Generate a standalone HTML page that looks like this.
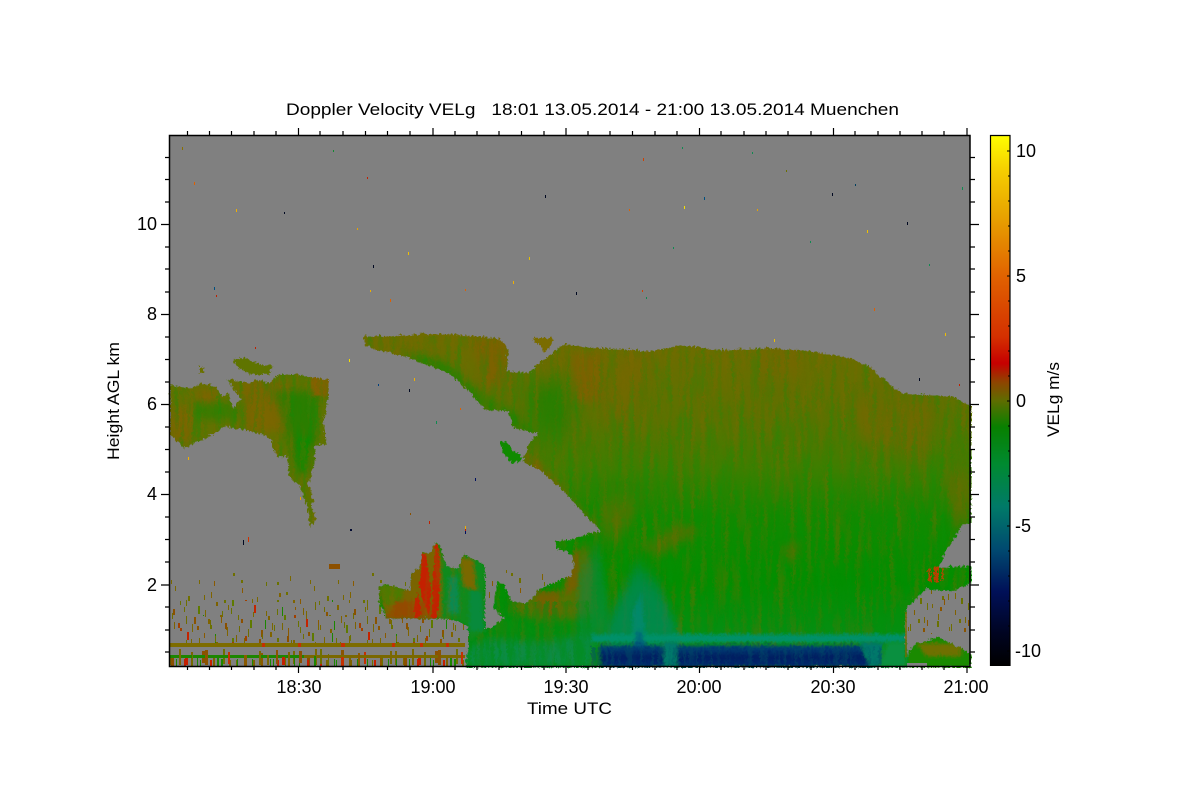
<!DOCTYPE html>
<html>
<head>
<meta charset="utf-8">
<style>
html,body{margin:0;padding:0;background:#fff;width:1200px;height:800px;overflow:hidden}
svg{display:block}
text{font-family:"Liberation Sans",sans-serif;font-size:17px;fill:#000}
.t{font-size:18px}
</style>
</head>
<body>
<svg width="1200" height="800" viewBox="0 0 1200 800" xmlns="http://www.w3.org/2000/svg">
<defs>
<linearGradient id="cb" x1="0" y1="135" x2="0" y2="666" gradientUnits="userSpaceOnUse">
<stop offset="0" stop-color="#ffff00"/>
<stop offset="0.07" stop-color="#f5cc00"/>
<stop offset="0.15" stop-color="#e8a400"/>
<stop offset="0.27" stop-color="#e06000"/>
<stop offset="0.38" stop-color="#d43000"/>
<stop offset="0.43" stop-color="#c60000"/>
<stop offset="0.465" stop-color="#8f4400"/>
<stop offset="0.50" stop-color="#5f6c00"/>
<stop offset="0.55" stop-color="#088000"/>
<stop offset="0.62" stop-color="#008a30"/>
<stop offset="0.70" stop-color="#007a68"/>
<stop offset="0.78" stop-color="#004a70"/>
<stop offset="0.86" stop-color="#001058"/>
<stop offset="0.94" stop-color="#000420"/>
<stop offset="1" stop-color="#000000"/>
</linearGradient>
<linearGradient id="mg" x1="0" y1="340" x2="0" y2="640" gradientUnits="userSpaceOnUse">
<stop offset="0" stop-color="#6e6c00"/>
<stop offset="0.25" stop-color="#5c7200"/>
<stop offset="0.42" stop-color="#3e7e00"/>
<stop offset="0.58" stop-color="#128a00"/>
<stop offset="0.8" stop-color="#028e00"/>
<stop offset="1" stop-color="#068e14"/>
</linearGradient>
<linearGradient id="blue" x1="0" y1="641" x2="0" y2="666" gradientUnits="userSpaceOnUse">
<stop offset="0" stop-color="#006a78"/>
<stop offset="0.22" stop-color="#003c72"/>
<stop offset="0.6" stop-color="#001c60"/>
<stop offset="1" stop-color="#002a70"/>
</linearGradient>
<filter id="b4" x="-30%" y="-30%" width="160%" height="160%" color-interpolation-filters="sRGB"><feGaussianBlur stdDeviation="4"/></filter>
<filter id="b2" x="-30%" y="-30%" width="160%" height="160%" color-interpolation-filters="sRGB"><feGaussianBlur stdDeviation="1.5"/></filter>
<filter id="b10" x="-30%" y="-30%" width="160%" height="160%" color-interpolation-filters="sRGB"><feGaussianBlur stdDeviation="10"/></filter>
<filter id="b7" x="-30%" y="-30%" width="160%" height="160%" color-interpolation-filters="sRGB"><feGaussianBlur stdDeviation="3 9"/></filter>
<filter id="streakB" x="0" y="0" width="100%" height="100%" color-interpolation-filters="sRGB">
<feTurbulence type="fractalNoise" baseFrequency="0.18 0.018" numOctaves="3" seed="4"/>
<feColorMatrix type="matrix" values="0 0 0 0 0.50  0 0 0 0 0.41  0 0 0 0 0  3 0 0 0 -1.35"/>
</filter>
<filter id="streakG" x="0" y="0" width="100%" height="100%" color-interpolation-filters="sRGB">
<feTurbulence type="fractalNoise" baseFrequency="0.18 0.02" numOctaves="3" seed="9"/>
<feColorMatrix type="matrix" values="0 0 0 0 0  0 0 0 0 0.58  0 0 0 0 0.04  3 0 0 0 -1.35"/>
</filter>
<filter id="streakT" x="0" y="0" width="100%" height="100%" color-interpolation-filters="sRGB">
<feTurbulence type="fractalNoise" baseFrequency="0.3 0.03" numOctaves="2" seed="15"/>
<feColorMatrix type="matrix" values="0 0 0 0 0  0 0 0 0 0.30  0 0 0 0 0.40  3.4 0 0 0 -1.4"/>
</filter>
<filter id="streakL" x="0" y="0" width="100%" height="100%" color-interpolation-filters="sRGB">
<feTurbulence type="fractalNoise" baseFrequency="0.25 0.03" numOctaves="2" seed="21"/>
<feColorMatrix type="matrix" values="0 0 0 0 0  0 0 0 0 0.55  0 0 0 0 0.06  3.4 0 0 0 -1.3"/>
</filter>
<filter id="rough" x="-2%" y="-2%" width="104%" height="104%" color-interpolation-filters="sRGB">
<feTurbulence type="turbulence" baseFrequency="0.28 0.22" numOctaves="2" seed="3" result="n"/>
<feDisplacementMap in="SourceGraphic" in2="n" scale="5" xChannelSelector="R" yChannelSelector="G"/>
</filter>
<clipPath id="main"><path fill-rule="evenodd" d="M363 335L378 335L400 334L427 333L445 333L477 335L498 338L503 343L507 350L505 370L527 372L537 363L550 353L563 343L600 347L650 350L680 344L720 349L770 347L810 350L850 357L868 365L880 376L900 392L950 395L970 405L970 522L960 524L956 534L944 550L938 566L970 565L970 582L950 590L925 588L912 600L905 607L904 633L907 657L907 666L465 666L467 640L467 625L453 618L385 617L378 600L378 585L385 583L403 588L409 590L410 573L418 567L422 550L428 553L435 540L440 547L445 565L457 567L463 552L470 557L483 563L484 577L484 627L490 627L503 617L492 606L496 580L503 583L510 600L523 602L532 597L538 588L550 583L560 578L570 575L573 563L570 553L555 547L553 540L570 538L590 532L600 530L583 513L563 490L540 470L522 460L527 443L537 432L513 427L507 410L483 408L470 393L450 373L430 365L400 354L380 350L363 344Z M550 367L558 367L558 378L550 378Z"/></clipPath>
<clipPath id="left"><path d="M169 384L190 387L200 382L213 385L222 395L227 392L232 407L240 398L226 378L250 382L255 378L268 382L277 373L297 373L327 379L327 392L325 410L322 420L325 443L313 445L314 457L310 475L307 484L310 490L313 500L309 503L315 517L309 527L306 505L298 483L288 477L286 453L278 457L272 448L270 437L250 430L230 427L222 425L213 433L203 437L183 447L170 435L169 433Z"/></clipPath>
<clipPath id="rlow"><path d="M907 653L913 643L925 640L937 635L950 642L960 647L970 653L970 666L907 666Z"/></clipPath>
<pattern id="sp1" x="169" y="605" width="181" height="40" patternUnits="userSpaceOnUse">
<rect x="3" y="8" width="1" height="6" fill="#6f6c00"/><rect x="9" y="18" width="2" height="5" fill="#a04000"/><rect x="15" y="2" width="1" height="5" fill="#6f7000"/><rect x="18" y="27" width="2" height="8" fill="#c42400"/><rect x="25" y="12" width="2" height="7" fill="#8a5400"/><rect x="30" y="33" width="1" height="5" fill="#7a6800"/><rect x="36" y="5" width="1" height="7" fill="#7a6800"/><rect x="41" y="20" width="2" height="4" fill="#6a7200"/><rect x="46" y="29" width="1" height="9" fill="#1b8600"/><rect x="52" y="10" width="1" height="8" fill="#8a5a00"/><rect x="57" y="22" width="2" height="3" fill="#806400"/><rect x="62" y="3" width="1" height="6" fill="#6a7200"/><rect x="67" y="30" width="1" height="7" fill="#7d6200"/><rect x="72" y="14" width="2" height="4" fill="#8c5000"/><rect x="79" y="24" width="1" height="8" fill="#6f6c00"/><rect x="84" y="7" width="1" height="5" fill="#7a6800"/><rect x="90" y="34" width="2" height="4" fill="#8a5400"/><rect x="96" y="15" width="1" height="9" fill="#1b8600"/><rect x="101" y="27" width="2" height="5" fill="#806400"/><rect x="108" y="4" width="1" height="6" fill="#6a7200"/><rect x="113" y="18" width="1" height="7" fill="#7a6800"/><rect x="118" y="31" width="2" height="6" fill="#8a5000"/><rect x="125" y="10" width="2" height="3" fill="#a04000"/><rect x="131" y="22" width="1" height="6" fill="#6f7000"/><rect x="137" y="6" width="1" height="8" fill="#7a6800"/><rect x="143" y="28" width="2" height="8" fill="#5f7a00"/><rect x="149" y="15" width="1" height="5" fill="#8a5a00"/><rect x="155" y="2" width="1" height="5" fill="#6f6c00"/><rect x="161" y="24" width="2" height="4" fill="#7d6200"/><rect x="167" y="33" width="1" height="6" fill="#6a7200"/><rect x="172" y="11" width="1" height="7" fill="#806400"/><rect x="177" y="20" width="2" height="8" fill="#5f7a00"/>
</pattern>
<pattern id="sp1b" href="#sp1" patternTransform="translate(67 13)"/>
<pattern id="sp1c" href="#sp1" patternTransform="translate(119 27)"/>
<pattern id="sp4" x="169" y="568" width="139" height="37" patternUnits="userSpaceOnUse">
<rect x="6" y="18" width="1" height="5" fill="#7a6800"/><rect x="19" y="28" width="2" height="5" fill="#6f7000"/><rect x="30" y="12" width="1" height="4" fill="#7a6800"/><rect x="42" y="24" width="1" height="6" fill="#806400"/><rect x="55" y="32" width="2" height="3" fill="#6a7200"/><rect x="64" y="5" width="2" height="3" fill="#6f7000"/><rect x="73" y="20" width="1" height="5" fill="#8a5a00"/><rect x="88" y="29" width="1" height="5" fill="#7a6800"/><rect x="97" y="14" width="1" height="4" fill="#6a7200"/><rect x="110" y="25" width="2" height="4" fill="#806400"/><rect x="121" y="8" width="1" height="5" fill="#7a6800"/><rect x="131" y="31" width="1" height="5" fill="#8a5a00"/>
</pattern>
<pattern id="sp4b" href="#sp4" patternTransform="translate(53 19)"/>
<pattern id="sp2" x="169" y="649" width="233" height="18" patternUnits="userSpaceOnUse">
<rect x="1" y="6" width="2" height="10" fill="#7a6800"/><rect x="7" y="10" width="1" height="7" fill="#1b8600"/><rect x="10" y="1" width="2" height="14" fill="#8a5400"/><rect x="16" y="8" width="3" height="8" fill="#c42000"/><rect x="22" y="3" width="2" height="14" fill="#7d6200"/><rect x="28" y="9" width="1" height="8" fill="#1b8600"/><rect x="33" y="2" width="3" height="12" fill="#8c5000"/><rect x="41" y="11" width="2" height="6" fill="#c42000"/><rect x="48" y="7" width="2" height="10" fill="#1b8600"/><rect x="54" y="0" width="2" height="15" fill="#6f7000"/><rect x="60" y="11" width="2" height="6" fill="#7a6800"/><rect x="68" y="10" width="1" height="7" fill="#1b8600"/><rect x="75" y="8" width="3" height="9" fill="#c43000"/><rect x="84" y="11" width="2" height="6" fill="#7d6200"/><rect x="92" y="4" width="2" height="13" fill="#8a5a00"/><rect x="101" y="10" width="1" height="7" fill="#1b8600"/><rect x="108" y="11" width="2" height="6" fill="#c42000"/><rect x="116" y="8" width="1" height="9" fill="#6a7200"/><rect x="124" y="2" width="2" height="13" fill="#7a6800"/><rect x="130" y="10" width="1" height="7" fill="#1b8600"/><rect x="138" y="9" width="3" height="8" fill="#8a5000"/><rect x="146" y="0" width="2" height="16" fill="#7a6800"/><rect x="151" y="10" width="2" height="7" fill="#c42000"/><rect x="159" y="5" width="1" height="12" fill="#6a7200"/><rect x="167" y="11" width="1" height="6" fill="#1b8600"/><rect x="172" y="1" width="3" height="15" fill="#8a5400"/><rect x="180" y="9" width="2" height="8" fill="#7d6200"/><rect x="188" y="10" width="2" height="7" fill="#1b8600"/><rect x="195" y="3" width="2" height="12" fill="#c43000"/><rect x="203" y="11" width="1" height="6" fill="#6a7200"/><rect x="211" y="6" width="3" height="11" fill="#8a5a00"/><rect x="219" y="10" width="1" height="7" fill="#1b8600"/><rect x="226" y="2" width="2" height="14" fill="#7a6800"/>
</pattern>
<pattern id="sp2b" href="#sp2" patternTransform="translate(97 0)"/>
<pattern id="sp3" x="905" y="590" width="41" height="44" patternUnits="userSpaceOnUse">
<rect x="2" y="4" width="1" height="6" fill="#7a6800"/><rect x="9" y="20" width="1" height="5" fill="#806000"/><rect x="15" y="8" width="2" height="6" fill="#6a7200"/><rect x="22" y="30" width="1" height="6" fill="#8a5400"/><rect x="27" y="14" width="1" height="4" fill="#7a6800"/><rect x="5" y="34" width="1" height="7" fill="#6f7000"/><rect x="18" y="38" width="2" height="4" fill="#8a5400"/><rect x="33" y="24" width="1" height="6" fill="#7a6800"/><rect x="37" y="6" width="2" height="4" fill="#6f7000"/>
</pattern>
<pattern id="sp3b" href="#sp3" patternTransform="translate(17 23)"/>
</defs>

<rect x="169" y="135" width="801" height="531" fill="#808080"/>

<!-- speckles in gray regions -->
<rect x="169" y="568" width="300" height="37" fill="url(#sp4)"/>
<rect x="169" y="580" width="300" height="30" fill="url(#sp4b)"/>
<rect x="169" y="605" width="300" height="40" fill="url(#sp1)"/>
<rect x="169" y="600" width="300" height="45" fill="url(#sp1b)"/>
<rect x="169" y="615" width="300" height="30" fill="url(#sp1c)"/>
<rect x="169" y="649" width="296" height="18" fill="url(#sp2)"/>
<rect x="169" y="643" width="296" height="4" fill="#7d6c00"/>
<rect x="169" y="655" width="135" height="3" fill="#1c8600"/>
<rect x="304" y="655" width="161" height="3" fill="#7a6800"/>
<rect x="169" y="649" width="296" height="18" fill="url(#sp2b)"/>
<rect x="262" y="643" width="3" height="4" fill="#c43000"/><rect x="298" y="643" width="3" height="4" fill="#c43000"/><rect x="341" y="643" width="4" height="4" fill="#c43000"/><rect x="392" y="643" width="3" height="4" fill="#c43000"/><rect x="420" y="643" width="3" height="4" fill="#c43000"/><rect x="446" y="643" width="3" height="4" fill="#c43000"/>
<rect x="470" y="570" width="100" height="35" fill="url(#sp4)"/>
<rect x="470" y="570" width="100" height="35" fill="url(#sp4b)"/>
<rect x="905" y="590" width="65" height="44" fill="url(#sp3)"/>
<rect x="905" y="590" width="65" height="44" fill="url(#sp3b)"/>
<rect x="329" y="564" width="11" height="5" fill="#8c5000"/>

<!-- main cloud -->
<g filter="url(#rough)">
<g clip-path="url(#main)">
<rect x="169" y="135" width="801" height="531" fill="url(#mg)"/>
<path d="M400 352L440 358L480 392L515 412L540 440L510 425L480 410L450 380Z" fill="#2a8000" filter="url(#b4)"/>
<path d="M525 385L565 375L575 420L555 440L530 420Z" fill="#2a7e00" filter="url(#b10)"/>
<path d="M470 338H505V385H485ZM570 352H600V400H575ZM525 445L545 470L585 515L598 530L580 530L555 500L525 470Z" fill="#7c6200" filter="url(#b4)"/>
<path d="M600 410L625 350L650 350L625 430ZM760 345H800V375H760ZM850 400H930L925 460L860 440ZM945 470H970V525H950ZM600 500H640L620 535H600Z" fill="#7a6600" filter="url(#b7)" opacity="0.6"/>
<path d="M640 545L680 522L700 530L655 555ZM780 545L800 540L790 565Z" fill="#806000" filter="url(#b4)" opacity="0.5"/>
<rect x="169" y="335" width="801" height="331" filter="url(#streakB)" opacity="0.4"/>
<rect x="169" y="335" width="801" height="331" filter="url(#streakG)" opacity="0.3"/>
<!-- low mixed area -->
<path d="M515 592H560L568 565L585 540L592 570L590 615L540 620L510 610Z" fill="#7a6600" filter="url(#b4)" opacity="0.7"/>
<path d="M535 590H558L556 615L535 610ZM566 558L578 548L576 585L565 595Z" fill="#8a5600" filter="url(#b2)" opacity="0.6"/>
<path d="M468 645L490 638L540 642L590 632L590 666H465Z" fill="#0a8c50" filter="url(#b4)" opacity="0.8"/>
<path d="M578 570L598 545L612 640H575Z" fill="#0a8a48" filter="url(#b7)" opacity="0.55"/>
<path d="M612 610L636 565L658 585L672 620L682 645H605Z" fill="#00886a" filter="url(#b7)" opacity="0.65"/>
<path d="M632 610L640 590L645 640H630Z" fill="#008a80" filter="url(#b2)" opacity="0.6"/>
<rect x="590" y="633" width="315" height="8" fill="#00906a" filter="url(#b2)"/>
<rect x="465" y="600" width="125" height="66" filter="url(#streakL)" opacity="0.55"/>
<!-- navy band -->
<path d="M598 644H632L636 630L640 630L645 644H662L664 666H600ZM673 644H860L870 666H676Z" fill="url(#blue)" filter="url(#b2)"/>
<path d="M662 641H676V666H662ZM858 641H882L880 666H868Z" fill="#00786a" filter="url(#b2)"/>
<path d="M878 666L886 641H905V666Z" fill="#0a9040" filter="url(#b2)"/>
<rect x="590" y="646" width="290" height="20" filter="url(#streakT)" opacity="0.5"/>
<!-- plume -->
<path d="M378 585L403 588L410 572L422 550L435 540L443 563L447 617L385 617Z" fill="#7a6400" filter="url(#b2)"/>
<path d="M378 583H402L400 602L384 604Z" fill="#4a7c00" filter="url(#b2)"/>
<path d="M395 600H430V617H385Z" fill="#944a00" filter="url(#b2)"/>
<path d="M440 545L455 566L466 552L484 565L484 630L467 640L467 625L453 618L440 617Z" fill="#108a1c" filter="url(#b2)"/>
<path d="M448 575L456 575L458 612L446 612Z" fill="#0a8a52" filter="url(#b2)"/>
<path d="M458 555L472 558L476 590L462 585Z" fill="#7a6800" filter="url(#b2)"/>
<path d="M468 590L480 590L483 630L468 630Z" fill="#088a3c" filter="url(#b2)"/>
<path d="M421 552L424 552L430 590L427 615L424 605L418 585ZM434 543L437 545L439 582L436 617H430L432 580ZM413 604L417 592L420 615L413 617Z" fill="#c42000"/>
<rect x="378" y="545" width="85" height="72" filter="url(#streakB)" opacity="0.5"/>
</g>
</g>

<!-- left cloud -->
<g filter="url(#rough)">
<g clip-path="url(#left)">
<rect x="169" y="360" width="170" height="175" fill="#627200"/>
<path d="M240 380H290V430H245ZM169 405H190V440H169ZM195 388H215V405H195Z" fill="#7a6600" filter="url(#b4)"/>
<path d="M275 390L318 390L316 430L308 470L295 475L285 430Z" fill="#2a7e00" filter="url(#b4)"/>
<path d="M298 435L310 435L306 470H300Z" fill="#108a00" filter="url(#b2)"/>
<path d="M190 402H238V418H195Z" fill="#3a7c00" filter="url(#b4)"/>
<path d="M310 375H330V395H312Z" fill="#866000" filter="url(#b2)"/>
<rect x="169" y="360" width="170" height="175" filter="url(#streakB)" opacity="0.45"/>
<rect x="169" y="360" width="170" height="175" filter="url(#streakG)" opacity="0.35"/>
</g>
<path d="M231 358L245 357L258 363L272 365L267 373L248 373L238 367Z" fill="#5f7400"/>
<rect x="198" y="366" width="5" height="6" fill="#6a7000"/>
<path d="M500 441L506 440L512 450L520 454L520 460L510 462L501 451Z" fill="#108a00"/>
<path d="M530 337L552 337L550 345L543 351L538 344Z" fill="#7a6c00"/>
<g clip-path="url(#rlow)">
<rect x="905" y="630" width="66" height="37" fill="#1a8a00"/>
<path d="M915 642H960V655H925Z" fill="#6f7000" filter="url(#b2)"/>
</g>
<rect x="927" y="567" width="3" height="14" fill="#b04400"/><rect x="933" y="565" width="4" height="16" fill="#b84000"/><rect x="940" y="567" width="2" height="12" fill="#a05000"/>
</g>
<rect x="905" y="612" width="2" height="45" fill="#7a6a00" opacity="0.7"/>
<rect x="907" y="663" width="20" height="3" fill="#808080"/>

<!-- scattered pixels -->
<g>
<rect x="182" y="147" width="1" height="3" fill="#8a7000"/><rect x="194" y="182" width="1" height="3" fill="#e06000"/><rect x="236" y="209" width="1" height="3" fill="#f0b000"/><rect x="284" y="212" width="1" height="2" fill="#000820"/><rect x="333" y="150" width="1" height="2" fill="#108a30"/><rect x="367" y="177" width="1" height="2" fill="#c02000"/><rect x="357" y="228" width="1" height="2" fill="#e8a400"/><rect x="373" y="265" width="1" height="3" fill="#000820"/><rect x="408" y="252" width="1" height="3" fill="#f0c000"/><rect x="214" y="287" width="1" height="3" fill="#005080"/><rect x="216" y="295" width="1" height="2" fill="#c02000"/><rect x="370" y="290" width="1" height="2" fill="#f0b000"/><rect x="390" y="299" width="1" height="3" fill="#e06000"/><rect x="465" y="289" width="1" height="2" fill="#e06000"/>
<rect x="545" y="195" width="1" height="3" fill="#000820"/><rect x="643" y="158" width="1" height="3" fill="#d04000"/><rect x="682" y="147" width="1" height="2" fill="#108a50"/><rect x="629" y="209" width="1" height="2" fill="#e06000"/><rect x="684" y="206" width="1" height="3" fill="#f5e000"/><rect x="704" y="197" width="1" height="3" fill="#005080"/><rect x="757" y="209" width="1" height="2" fill="#e8a400"/><rect x="752" y="152" width="1" height="2" fill="#108a50"/><rect x="786" y="170" width="1" height="2" fill="#6a7000"/><rect x="832" y="193" width="1" height="3" fill="#000820"/><rect x="855" y="184" width="1" height="2" fill="#004060"/><rect x="907" y="222" width="1" height="3" fill="#000820"/><rect x="867" y="230" width="1" height="3" fill="#f0c000"/><rect x="962" y="187" width="1" height="3" fill="#108a50"/><rect x="929" y="264" width="1" height="2" fill="#108a50"/><rect x="810" y="241" width="1" height="2" fill="#108a50"/><rect x="673" y="247" width="1" height="2" fill="#108a50"/><rect x="529" y="257" width="1" height="3" fill="#e8c000"/><rect x="513" y="281" width="1" height="3" fill="#f0b000"/><rect x="576" y="292" width="1" height="3" fill="#000820"/><rect x="642" y="290" width="1" height="2" fill="#d04000"/><rect x="646" y="297" width="1" height="2" fill="#108a50"/><rect x="874" y="308" width="1" height="3" fill="#e06000"/><rect x="945" y="333" width="1" height="3" fill="#f0c000"/><rect x="919" y="378" width="1" height="3" fill="#000820"/><rect x="959" y="384" width="1" height="2" fill="#c02000"/><rect x="774" y="339" width="1" height="3" fill="#f0c000"/><rect x="255" y="347" width="1" height="2" fill="#c02000"/>
<rect x="349" y="359" width="1" height="3" fill="#f5e000"/><rect x="378" y="384" width="1" height="2" fill="#004080"/><rect x="414" y="378" width="1" height="3" fill="#f0b000"/><rect x="409" y="389" width="1" height="3" fill="#000820"/><rect x="460" y="408" width="1" height="2" fill="#e06000"/><rect x="436" y="421" width="1" height="3" fill="#108a50"/><rect x="188" y="457" width="1" height="3" fill="#f0b000"/><rect x="300" y="497" width="1" height="3" fill="#e8a400"/><rect x="350" y="529" width="2" height="2" fill="#000830"/><rect x="465" y="526" width="1" height="3" fill="#f0b000"/><rect x="465" y="529" width="1" height="2" fill="#c02000"/><rect x="465" y="531" width="1" height="3" fill="#001060"/><rect x="429" y="521" width="1" height="3" fill="#c02000"/><rect x="243" y="540" width="1" height="5" fill="#000820"/><rect x="248" y="537" width="1" height="5" fill="#d03000"/><rect x="410" y="513" width="1" height="2" fill="#8a5000"/><rect x="475" y="478" width="1" height="3" fill="#001060"/>
</g>

<!-- axes frame -->
<rect x="169.5" y="135.5" width="800.5" height="531" fill="none" stroke="#000" stroke-width="1.5"/>
<path fill="none" stroke="#000" stroke-width="1.2" d="M187.5 135V131M209.5 135V131M231.5 135V131M254 135V131M276 135V131M320 135V131M343 135V131M365.5 135V131M387.5 135V131M410 135V131M455 135V131M477 135V131M499 135V131M521.5 135V131M544 135V131M588 135V131M610 135V131M632.5 135V131M655 135V131M677 135V131M721 135V131M744 135V131M766 135V131M788 135V131M811 135V131M855 135V131M878 135V131M900 135V131M922 135V131M944 135V131
M298.5 135V128M433 135V128M566 135V128M699.5 135V128M833.5 135V128M967 135V128
M187.5 667V670M209.5 667V670M231.5 667V670M254 667V670M276 667V670M320 667V670M343 667V670M365.5 667V670M387.5 667V670M410 667V670M455 667V670M477 667V670M499 667V670M521.5 667V670M544 667V670M588 667V670M610 667V670M632.5 667V670M655 667V670M677 667V670M721 667V670M744 667V670M766 667V670M788 667V670M811 667V670M855 667V670M878 667V670M900 667V670M922 667V670M944 667V670
M298.5 667V673M433 667V673M566 667V673M699.5 667V673M833.5 667V673M967 667V673
M169 157.5H165M169 179.5H165M169 202H165M169 247H165M169 269H165M169 292H165M169 337H165M169 359.5H165M169 382H165M169 427H165M169 449.5H165M169 472H165M169 517H165M169 539.5H165M169 562H165M169 607H165M169 630H165M169 652H165
M169 224.5H161M169 314.5H161M169 404.5H161M169 494.5H161M169 585H161
M970 157.5H975M970 179.5H975M970 202H975M970 247H975M970 269H975M970 292H975M970 337H975M970 359.5H975M970 382H975M970 427H975M970 449.5H975M970 472H975M970 517H975M970 539.5H975M970 562H975M970 607H975M970 630H975M970 652H975
M970 224.5H979M970 314.5H979M970 404.5H979M970 494.5H979M970 585H979"/>

<!-- colorbar -->
<rect x="990" y="135" width="20" height="531" fill="url(#cb)"/>
<path d="M990.5 666V135.5H1010V666" fill="none" stroke="#000" stroke-width="1.2"/>
<path fill="none" stroke="#000" stroke-width="1" d="M1007 151H1010M1008 176H1010M1008 201H1010M1008 226H1010M1008 251H1010M1007 276H1010M1008 301H1010M1008 326H1010M1008 351H1010M1008 376H1010M1007 401H1010M1008 426H1010M1008 451H1010M1008 476H1010M1008 501H1010M1007 526H1010M1008 551H1010M1008 576H1010M1008 601H1010M1008 626H1010M1007 651H1010"/>

<!-- text -->
<text x="286" y="115" textLength="613" lengthAdjust="spacingAndGlyphs" xml:space="preserve">Doppler Velocity VELg   18:01 13.05.2014 - 21:00 13.05.2014 Muenchen</text>
<g text-anchor="end">
<text class="t" x="157" y="230">10</text><text class="t" x="157" y="320">8</text><text class="t" x="157" y="410">6</text><text class="t" x="157" y="500">4</text><text class="t" x="157" y="591">2</text>
</g>
<g text-anchor="middle">
<text class="t" x="299" y="693">18:30</text><text class="t" x="433" y="693">19:00</text><text class="t" x="566" y="693">19:30</text><text class="t" x="699" y="693">20:00</text><text class="t" x="833" y="693">20:30</text><text class="t" x="966" y="693">21:00</text>
</g>
<text x="527" y="714" textLength="85" lengthAdjust="spacingAndGlyphs">Time UTC</text>
<text transform="translate(119 460) rotate(-90)" textLength="118" lengthAdjust="spacingAndGlyphs">Height AGL km</text>
<text transform="translate(1059 437) rotate(-90)" textLength="75" lengthAdjust="spacingAndGlyphs">VELg m/s</text>
<text class="t" x="1016" y="157">10</text><text class="t" x="1016" y="282">5</text><text class="t" x="1016" y="407">0</text><text class="t" x="1015" y="532">-5</text><text class="t" x="1015" y="657">-10</text>
</svg>
</body>
</html>
